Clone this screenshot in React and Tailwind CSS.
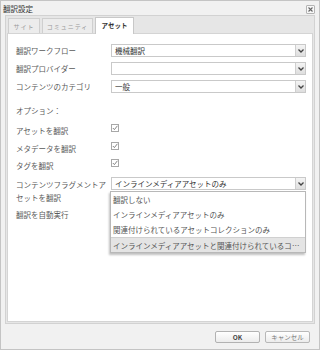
import React from "react";

const Select = ({ value, children }) => (
    <div className="relative w-[195px] h-[13px] flex border border-[#c9c9c9] bg-white">
        <div className="flex-1 px-[3px] text-[7.5px] leading-[11px] text-[#333] truncate">{value}</div>
        <div className="w-[10px] h-full flex items-center justify-center border-l border-[#cfcfcf] bg-gradient-to-b from-[#f4f4f4] to-[#dedede]">
            <svg width="6" height="4" viewBox="0 0 6 4">
                <path d="M0.5 0.5 L3 3 L5.5 0.5" fill="none" stroke="#444" strokeWidth="1.3" />
            </svg>
        </div>
        {children}
    </div>
);

const Check = () => (
    <div className="w-[8px] h-[8px] border border-[#a8a8a8] bg-white flex items-center justify-center">
        <svg width="6" height="6" viewBox="0 0 6 6">
            <path d="M0.8 3 L2.4 4.6 L5.4 0.8" fill="none" stroke="#777" strokeWidth="0.9" />
        </svg>
    </div>
);

const Label = ({ children, className = "" }) => (
    <div className={`w-[95px] text-[7.5px] leading-[13px] text-[#5a5a5a] ${className}`}>{children}</div>
);

const options = [
    "翻訳しない",
    "インラインメディアアセットのみ",
    "関連付けられているアセットコレクションのみ",
    "インラインメディアアセットと関連付けられているコレ...",
];

export default function App() {
    return (
        <div className="w-[320px] h-[350px] flex flex-col bg-[#f1f1f1] border border-[#c4c4c4] font-['Noto_Sans_CJK_JP',sans-serif] overflow-hidden">
            {/* title */}
            <div className="h-[14px] flex items-center justify-between pl-[2px] pr-[4px]">
                <span className="text-[7.5px] leading-[10px] text-[#333] mt-[2px]">翻訳設定</span>
                <div className="w-[9px] h-[9px] mt-[3px] border border-[#b4b4b4] rounded-[1px] bg-[#f7f7f7] flex items-center justify-center">
                    <svg width="5" height="5" viewBox="0 0 5 5">
                        <path d="M0.5 0.5 L4.5 4.5 M4.5 0.5 L0.5 4.5" stroke="#666" strokeWidth="1.1" />
                    </svg>
                </div>
            </div>

            {/* tab panel */}
            <div className="mx-[4px] h-[309px] flex flex-col border border-[#d2d2d2] bg-[#e6e6e6]">
                <div className="h-[17px] flex items-end gap-[2px] pl-[2px]">
                    <div className="w-[32px] h-[15px] flex items-center justify-center border border-b-0 border-[#cfcfcf] bg-[#ececec] text-[6px] tracking-[1px] text-[#9a9a9a]">サイト</div>
                    <div className="w-[51px] h-[15px] flex items-center justify-center border border-b-0 border-[#cfcfcf] bg-[#ececec] text-[6px] tracking-[1px] text-[#9a9a9a]">コミュニティ</div>
                    <div className="w-[39px] h-[17px] -mb-px flex items-center justify-center border border-b-0 border-[#c8c8c8] bg-white text-[6.5px] font-bold text-[#333] z-10">アセット</div>
                </div>
                <div className="flex-1 mx-[1px] mb-[1px] border border-[#d4d4d4] bg-white pt-[10px] pl-[8px] flex flex-col">
                    <div className="flex items-center h-[13px]">
                        <Label className="text-[#3a3a3a]">翻訳ワークフロー</Label>
                        <Select value="機械翻訳" />
                    </div>
                    <div className="flex items-center h-[13px] mt-[5px]">
                        <Label className="text-[#3a3a3a]">翻訳プロバイダー</Label>
                        <Select value="" />
                    </div>
                    <div className="flex items-center h-[13px] mt-[5px]">
                        <Label>コンテンツのカテゴリ</Label>
                        <Select value="一般" />
                    </div>
                    <div className="h-[14px] mt-[10px] flex items-center">
                        <Label>オプション：</Label>
                    </div>
                    <div className="h-[14px] mt-[6px] flex items-center">
                        <Label>アセットを翻訳</Label>
                        <div className="-mt-[4px]"><Check /></div>
                    </div>
                    <div className="h-[14px] mt-[4px] flex items-center">
                        <Label>メタデータを翻訳</Label>
                        <div className="-mt-[4px]"><Check /></div>
                    </div>
                    <div className="h-[14px] mt-[3px] flex items-center">
                        <Label>タグを翻訳</Label>
                        <div className="-mt-[4px]"><Check /></div>
                    </div>
                    <div className="mt-[5px] flex items-start">
                        <Label className="pt-[1px]">コンテンツフラグメントア<br />セットを翻訳</Label>
                        <Select value="インラインメディアアセットのみ">
                            <div className="absolute left-[-2px] top-[13px] w-[196px] border border-[#b8b8b8] bg-white shadow-[-1px_2px_2px_rgba(0,0,0,0.25)] z-20">
                                {options.map((o, i) => (
                                    <div
                                        key={i}
                                        className={`h-[15px] px-[2px] text-[7.5px] leading-[15px] truncate ${i === 3 ? "bg-[#e4e4e4] border-t border-[#d0d0d0] text-[#555]" : "text-[#555]"}`}
                                    >
                                        {o}
                                    </div>
                                ))}
                            </div>
                        </Select>
                    </div>
                    <div className="h-[14px] mt-[3px] flex items-center">
                        <Label className="text-[#3a3a3a]">翻訳を自動実行</Label>
                        <div className="w-[8px] h-[8px] border border-[#777] bg-white" />
                    </div>
                </div>
            </div>

            {/* footer */}
            <div className="flex-1 flex items-center justify-end gap-[5px] pr-[9px] pt-[1px]">
                <button className="w-[45px] h-[12px] rounded-[2px] border border-[#b2b2b2] bg-gradient-to-b from-white to-[#ececec] text-[6.5px] leading-[10px] font-bold text-[#444]">OK</button>
                <button className="w-[45px] h-[12px] rounded-[2px] border border-[#b8b8b8] bg-gradient-to-b from-white to-[#ececec] text-[6.5px] leading-[10px] text-[#777]">キャンセル</button>
            </div>
        </div>
    );
}
